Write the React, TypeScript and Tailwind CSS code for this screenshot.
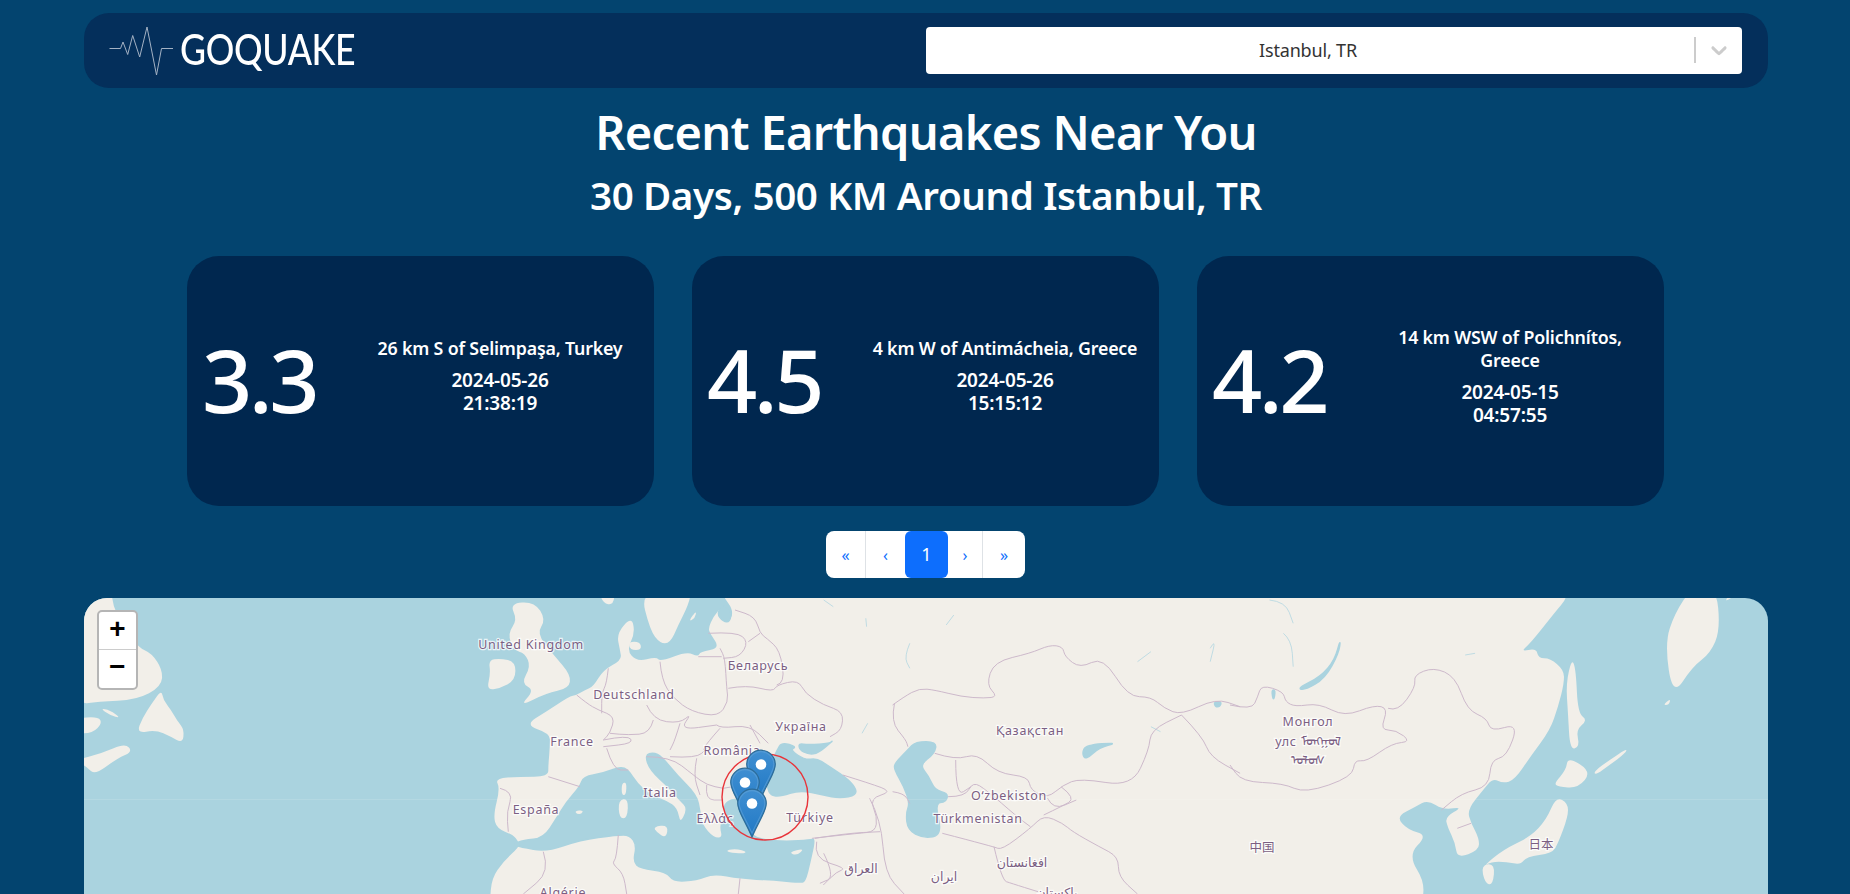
import React from "react";

type Quake = { mag: string; place: string; date: string; time: string };

const quakes: Quake[] = [
  { mag: "3.3", place: "26 km S of Selimpaşa, Turkey", date: "2024-05-26", time: "21:38:19" },
  { mag: "4.5", place: "4 km W of Antimácheia, Greece", date: "2024-05-26", time: "15:15:12" },
  { mag: "4.2", place: "14 km WSW of Polichnítos, Greece", date: "2024-05-15", time: "04:57:55" },
];

// map tracing helpers: each one reads points from a crop of the reference
const west = (p: number[][]) => p.map(([x, y]) => [60 + x * 0.3827, 590 + y / 3]);
const mid = (p: number[][]) => p.map(([x, y]) => [640 + x * 0.3827, 590 + y / 3]);
const east = (p: number[][]) => p.map(([x, y]) => [1230 + x * 0.3953, 590 + y / 3]);
const north = (p: number[][]) => p.map(([x, y]) => [560 + x / 3, 600 + y / 3]);
const south = (p: number[][]) => p.map(([x, y]) => [480 + x / 3, 745 + y / 3]);

// rounds the traced corners off with quadratic curves through the midpoints
const curve = (p: number[][], closed: boolean) => {
  const m = (a: number[], b: number[]) => `${((a[0] + b[0]) / 2).toFixed(1)} ${((a[1] + b[1]) / 2).toFixed(1)}`;
  const c = (a: number[]) => `${a[0].toFixed(1)} ${a[1].toFixed(1)}`;
  if (closed) {
    let d = `M${m(p[p.length - 1], p[0])}`;
    p.forEach((q, i) => {
      d += `Q${c(q)} ${m(q, p[(i + 1) % p.length])}`;
    });
    return d + "Z";
  }
  let d = `M${c(p[0])}`;
  for (let i = 1; i < p.length - 1; i++) d += `Q${c(p[i])} ${m(p[i], p[i + 1])}`;
  return d + `L${c(p[p.length - 1])}`;
};

const eurasia = [
  ...south([[30, 470], [35, 400], [70, 350], [120, 303], [115, 290], [100, 270], [50, 250], [40, 210], [60, 130], [45, 100], [120, 95], [205, 95], [205, 60], [210, 0]]),
  ...west([[1280, 430], [1215, 405], [1270, 365], [1330, 320]]),
  ...north([[50, 285], [75, 270], [100, 260], [130, 210], [185, 180], [180, 150], [170, 100], [215, 50], [225, 100], [200, 150], [230, 185], [290, 170], [300, 185], [380, 155], [415, 170], [420, 155], [480, 145], [450, 100], [445, 85], [460, 50], [490, 15], [510, 65], [520, 30], [490, -10], [490, -30]]),
  ...east([[855, -30], [855, 20], [820, 70], [760, 160], [735, 185], [775, 175], [780, 205], [810, 205], [845, 240], [845, 280], [830, 350], [810, 420], [760, 500], [720, 570], [690, 580], [665, 565], [640, 600], [600, 660], [610, 700], [630, 745], [630, 780], [575, 805], [570, 760], [550, 710], [545, 680], [590, 650], [540, 660], [500, 630], [470, 650], [420, 680], [450, 720], [500, 735], [450, 795], [495, 880], [480, 960]]),
  ...south([[30, 520]]),
];

const islands = [
  west([[1120, 210], [1150, 205], [1190, 215], [1190, 270], [1150, 295], [1115, 300], [1125, 250]]),
  west([[1175, 40], [1240, 35], [1270, 90], [1245, 130], [1290, 195], [1335, 255], [1330, 295], [1270, 310], [1200, 350], [1240, 300], [1205, 280], [1230, 230], [1215, 190], [1185, 180], [1170, 130], [1195, 90]]),
  west([[40, 0], [135, 0], [140, 60], [200, 170], [240, 190], [268, 240], [265, 290], [200, 330], [100, 335], [40, 345]]),
  west([[265, 300], [240, 340], [215, 385], [200, 430], [250, 420], [290, 440], [320, 460], [325, 420], [305, 390], [290, 360], [270, 330]]),
  west([[40, 385], [100, 380], [110, 400], [85, 430], [40, 430]]),
  west([[40, 510], [110, 490], [170, 460], [190, 485], [150, 505], [90, 555], [70, 530]]),
  west([[105, 355], [130, 360], [160, 385], [130, 375]]),
  north([[240, -30], [270, 90], [300, 130], [330, 130], [355, 75], [385, 15], [395, -30]]),
  north([[115, -30], [165, -30], [160, 15], [130, 10]]),
  north([[205, 125], [240, 125], [245, 150], [210, 150]]),
  north([[385, 65], [410, 30], [405, 55]]),
  south([[425, 115], [440, 112], [438, 150], [425, 150]]),
  south([[415, 165], [445, 160], [442, 220], [418, 220]]),
  south([[520, 245], [565, 240], [558, 280], [530, 262]]),
  south([[285, 198], [310, 195], [305, 207], [290, 207]]),
  south([[740, 315], [770, 312], [800, 320], [790, 326], [745, 322]]),
  south([[925, 322], [975, 310], [950, 332]]),
  east([[865, 205], [875, 240], [880, 370], [905, 390], [875, 420], [885, 470], [860, 480], [855, 370], [850, 280]]),
  east([[855, 500], [915, 545], [880, 595], [830, 590], [820, 580], [850, 540]]),
  east([[825, 620], [855, 640], [855, 680], [830, 760], [815, 790], [750, 800], [735, 825], [700, 815], [660, 815], [640, 830], [690, 780], [760, 740], [800, 690]]),
  east([[635, 825], [670, 820], [665, 885], [645, 880]]),
  east([[1170, -10], [1230, -10], [1240, 120], [1215, 190], [1170, 230], [1120, 320], [1100, 160], [1125, 70]]),
  east([[920, 545], [960, 510], [1005, 475], [1000, 490], [960, 525], [925, 555]]),
  east([[1095, 345], [1115, 325], [1110, 345]]),
  east([[1250, 38], [1265, 10], [1285, 10]]),
];

const seas = [
  south([[100, 299], [130, 285], [190, 280], [230, 220], [260, 170], [300, 125], [310, 95], [370, 85], [420, 65], [445, 75], [470, 115], [510, 150], [560, 170], [590, 190], [600, 240], [625, 190], [600, 165], [570, 130], [510, 75], [495, 30], [520, 22], [545, 35], [590, 90], [650, 150], [660, 200], [665, 240], [700, 280], [730, 280], [720, 240], [740, 215], [730, 180], [760, 160], [790, 170], [800, 190], [810, 270], [850, 285], [920, 290], [990, 285], [1005, 280], [990, 350], [975, 410], [960, 412], [880, 405], [780, 400], [700, 385], [650, 405], [580, 410], [560, 380], [480, 370], [460, 350], [470, 300], [450, 270], [410, 270], [300, 285], [200, 320], [120, 305]]),
  south([[875, 50], [892, 15], [905, -8], [950, 5], [930, 15], [975, 45], [1010, 40], [1040, 60], [1095, 95], [1125, 125], [1130, 150], [1080, 160], [1030, 150], [960, 135], [900, 155], [868, 150], [860, 110]]),
  south([[955, -5], [985, 0], [1050, -5], [1060, -15], [1015, 25], [985, 28], [960, 15]]),
  mid([[665, 520], [700, 480], [720, 455], [775, 455], [770, 490], [730, 525], [755, 560], [770, 600], [805, 610], [800, 635], [770, 640], [790, 735], [740, 745], [700, 720], [695, 670], [705, 640], [690, 590], [665, 540]]),
  mid([[1155, 490], [1165, 465], [1250, 458], [1200, 472], [1165, 510]]),
  mid([[1500, 335], [1520, 335], [1515, 350], [1503, 350]]),
  east([[280, 145], [265, 210], [230, 260], [170, 295], [190, 300], [240, 265], [275, 190]]),
  east([[105, 300], [115, 300], [110, 335]]),
  north([[490, 15], [515, 30], [510, 65], [490, 65], [470, 40]]),
];

const lakes: number[][][] = [
  mid([[705, 160], [690, 200], [705, 235]]),
  mid([[1300, 215], [1335, 185]]),
  mid([[590, 85], [592, 110]]),
  mid([[800, 105], [820, 75]]),
  mid([[580, 430], [595, 400]]),
  mid([[1335, 410], [1360, 425]]),
  mid([[1490, 175], [1505, 145], [1490, 215]]),
  mid([[480, 30], [505, 50]]),
  east([[135, 130], [155, 150], [160, 230]]),
  east([[100, 30], [140, 35], [160, 100]]),
  east([[595, 195], [620, 190]]),
];

const borders: number[][][] = [
  north([[50, 285], [80, 310], [115, 330], [165, 350], [150, 400], [130, 420]]),
  north([[145, 205], [140, 250], [125, 280], [125, 340]]),
  north([[300, 185], [305, 240], [340, 295], [395, 335], [475, 350], [505, 305], [500, 265], [495, 175], [480, 145]]),
  north([[415, 170], [485, 170]]),
  north([[505, 265], [560, 255], [640, 275], [650, 255], [715, 240], [735, 280], [790, 315], [850, 335], [845, 390], [810, 410]]),
  north([[650, 255], [675, 250], [660, 150], [620, 115], [600, 100], [585, 50], [525, 30]]),
  north([[445, 100], [530, 95], [565, 125], [540, 170], [490, 175]]),
  north([[565, 125], [600, 100]]),
  north([[260, 315], [280, 360], [360, 370], [395, 340], [360, 390], [470, 375]]),
  north([[280, 360], [270, 400], [205, 405], [150, 400]]),
  north([[360, 370], [345, 420], [330, 450]]),
  north([[470, 375], [480, 385], [570, 375], [625, 430]]),
  north([[480, 385], [440, 430], [430, 450]]),
  north([[570, 375], [600, 430]]),
  north([[130, 420], [205, 405], [220, 430], [130, 440]]),
  south([[60, 130], [100, 140], [80, 200], [85, 260]]),
  south([[205, 95], [300, 125]]),
  south([[380, 10], [400, 75], [445, 75]]),
  south([[500, 35], [570, 35], [640, 90], [680, 120], [730, 130]]),
  south([[570, 35], [650, 40], [680, 10]]),
  south([[650, 40], [640, 90], [660, 150]]),
  south([[680, 120], [675, 165], [730, 165]]),
  south([[730, 130], [790, 120], [870, 100]]),
  south([[190, 320], [210, 380], [130, 447]]),
  south([[415, 270], [410, 340], [395, 355], [430, 385], [440, 447]]),
  south([[1005, 280], [1100, 265], [1200, 260]]),
  south([[1010, 290], [1000, 340], [1100, 370], [1070, 380], [1030, 420]]),
  south([[780, 400], [775, 447]]),
  mid([[530, 555], [600, 580], [660, 605], [600, 625], [620, 680], [615, 725], [570, 730], [450, 745]]),
  mid([[660, 605], [690, 610], [705, 640]]),
  mid([[600, 625], [630, 690], [640, 850], [690, 912]]),
  mid([[660, 345], [690, 320], [730, 295], [770, 300], [840, 320], [900, 325], [935, 320], [905, 285], [925, 215], [1020, 190], [1070, 165], [1105, 170], [1110, 200], [1150, 235], [1210, 200], [1275, 320], [1335, 320], [1370, 355], [1415, 375], [1505, 325], [1568, 350]]),
  mid([[665, 340], [655, 395], [695, 450], [700, 470]]),
  mid([[770, 490], [825, 510], [880, 490], [935, 550], [1015, 560], [1020, 600], [1065, 625], [1105, 585], [1150, 565], [1285, 590], [1330, 480], [1335, 420], [1415, 375]]),
  mid([[825, 510], [825, 620], [865, 590]]),
  mid([[805, 620], [850, 620], [870, 575], [905, 600], [985, 680], [1020, 710]]),
  mid([[790, 730], [925, 770], [945, 780], [1020, 715], [1055, 675], [1105, 700], [1130, 725], [1200, 770], [1250, 800], [1250, 860], [1300, 912]]),
  mid([[925, 770], [945, 870], [970, 880], [1040, 905]]),
  mid([[1100, 590], [1140, 625], [1100, 650], [1055, 675]]),
  mid([[1065, 625], [1080, 660], [1140, 630]]),
  mid([[1415, 375], [1470, 440], [1490, 500], [1568, 550]]),
  mid([[480, 790], [510, 860], [470, 880]]),
  east([[0, 345], [55, 360], [70, 320], [80, 285], [135, 305], [140, 335], [165, 350], [225, 340], [290, 380], [365, 345], [400, 355], [380, 420], [420, 420], [458, 455], [410, 460], [345, 515], [315, 510], [310, 560], [190, 610], [135, 580], [30, 575], [0, 525]]),
  east([[400, 355], [425, 365], [470, 290], [465, 255], [515, 232], [570, 260], [600, 360], [650, 385], [660, 425], [730, 400], [700, 500], [660, 510], [655, 590], [585, 610], [535, 660]]),
  east([[575, 715], [610, 700]]),
];

const labels: { x: number; y: number; t: string; s?: number; ls?: number }[] = [
  { x: 531, y: 645, t: "United Kingdom" },
  { x: 634, y: 695, t: "Deutschland" },
  { x: 572, y: 742, t: "France" },
  { x: 536, y: 810, t: "España" },
  { x: 660, y: 793, t: "Italia" },
  { x: 732, y: 751, t: "România" },
  { x: 715, y: 819, t: "Ελλάς" },
  { x: 810, y: 818, t: "Türkiye" },
  { x: 758, y: 666, t: "Беларусь" },
  { x: 801, y: 727, t: "Україна" },
  { x: 1030, y: 731, t: "Қазақстан" },
  { x: 1009, y: 796, t: "O‘zbekiston" },
  { x: 978, y: 819, t: "Türkmenistan" },
  { x: 861, y: 869, t: "العراق", ls: 0 },
  { x: 944, y: 877, t: "ایران", ls: 0 },
  { x: 1022, y: 863, t: "افغانستان", ls: 0 },
  { x: 1057, y: 893, t: "پاکستان", ls: 0 },
  { x: 563, y: 893, t: "Algérie" },
  { x: 1308, y: 722, t: "Монгол" },
  { x: 1308, y: 742, t: "улс ᠮᠣᠩᠭᠣᠯ" },
  { x: 1308, y: 761, t: "ᠤᠯᠤᠰ" },
  { x: 1262, y: 848, t: "中国", ls: 0 },
  { x: 1541, y: 845, t: "日本", ls: 0 },
];

const Pin = ({ x, y }: { x: number; y: number }) => (
  <g transform={`translate(${x - 15} ${y - 48.5}) scale(1.2)`}>
    <path
      d="M12.5 0.6C5.9 0.6 0.6 6 0.6 12.5C0.6 19 5.5 24.5 12.5 40.4C19.5 24.5 24.4 19 24.4 12.5C24.4 6 19.1 0.6 12.5 0.6Z"
      fill="url(#pinFill)"
      stroke="#2e6c97"
      strokeWidth="1"
    />
    <path
      d="M12.5 1.8C6.6 1.8 1.8 6.6 1.8 12.5C1.8 18 6.2 23.2 12.5 37.2C18.8 23.2 23.2 18 23.2 12.5C23.2 6.6 18.4 1.8 12.5 1.8Z"
      fill="none"
      stroke="#5c9fd6"
      strokeOpacity="0.7"
      strokeWidth="0.9"
    />
    <circle cx="12.5" cy="12.5" r="4.4" fill="#fff" />
  </g>
);

const WorldMap = () => (
  <svg viewBox="84 598 1684 296" className="block w-full h-full">
    <defs>
      <linearGradient id="pinFill" x1="0" y1="0" x2="0" y2="1">
        <stop offset="0" stopColor="#408fd2" />
        <stop offset="1" stopColor="#2078c4" />
      </linearGradient>
    </defs>
    <rect x="84" y="598" width="1684" height="296" fill="#aad3df" />
    <g className="blur-[0.4px]">
      <path d={curve(eurasia, true)} fill="#f2efe9" />
      {seas.map((s, i) => (
        <path key={i} d={curve(s, true)} fill="#aad3df" stroke="#aad3df" strokeWidth="1.5" />
      ))}
      {islands.map((s, i) => (
        <path key={i} d={curve(s, true)} fill="#f2efe9" />
      ))}
      {lakes.map((s, i) => (
        <path key={i} d={curve(s, false)} fill="none" stroke="#aad3df" strokeOpacity="0.7" strokeWidth="1" />
      ))}
      {borders.map((s, i) => (
        <path key={i} d={curve(s, false)} fill="none" stroke="#cdb9cb" strokeWidth="1" />
      ))}
    </g>
    <line x1="84" x2="1768" y1="799.5" y2="799.5" stroke="#fff" strokeOpacity="0.12" />
    {labels.map((l) => (
      <text
        key={l.t}
        x={l.x}
        y={l.y + 4}
        textAnchor="middle"
        fill="#7b5f83"
        stroke="#fff"
        strokeOpacity="0.75"
        strokeWidth="2.5"
        fontSize={l.s ?? 12.5}
        letterSpacing={l.ls ?? 0.7}
        className="[paint-order:stroke] font-['Noto_Sans','DejaVu_Sans','Noto_Sans_CJK_SC',sans-serif]"
      >
        {l.t}
      </text>
    ))}
    <circle cx="765" cy="797" r="43" fill="none" stroke="#e8343a" strokeWidth="1.4" />
    <Pin x={761} y={798} />
    <Pin x={745} y={816} />
    <Pin x={752} y={837} />
  </svg>
);

const QuakeCard = ({ quake }: { quake: Quake }) => (
  <article className="flex items-center w-[467px] h-[250px] rounded-[32px] bg-[#00274f] text-white">
    <div className="w-[144px] pb-[4px] text-center text-[88px] leading-none tracking-[-0.04em] font-medium">{quake.mag}</div>
    <div className="ml-[36px] w-[266px] -mt-[10px] text-center font-semibold">
      <p className="text-[17.8px] leading-[23px] mb-[9px] tracking-[-0.01em]">{quake.place}</p>
      <p className="text-[19px] leading-[23px] tracking-[-0.01em]">
        {quake.date}
        <br />
        {quake.time}
      </p>
    </div>
  </article>
);

const App = () => {
  return (
    <div className="h-[894px] overflow-hidden bg-[#03446f] font-['Noto_Sans',sans-serif]">
      <div className="w-[1684px] ml-[84px]">
        <header className="mt-[13px] flex items-center justify-between h-[75px] rounded-[25px] bg-[#042f5b] pl-[25px] pr-[26px]">
          <div className="flex items-center">
            <svg viewBox="0 0 66 50" className="w-[66px] h-[50px]" fill="none">
              <path
                d="M0.5 22.5H11.5L14 16L18.7 28.5L23.7 9.5L30.7 31L38 1L47.5 49L52.5 22.5H64"
                stroke="#a4b2c4"
                strokeWidth="1"
              />
            </svg>
            <span className="ml-[5px] -mt-[3px] text-[42px] leading-none text-white font-['Lato',sans-serif] font-medium tracking-[-0.01em] origin-left scale-x-[0.85]">
              GOQUAKE
            </span>
          </div>
          <div className="flex items-center -mt-[1px] w-[816px] h-[47px] rounded-[4px] bg-white">
            <div className="flex-1 pr-[4px] text-center text-[18px] text-[#333333] tracking-[-0.01em]">Istanbul, TR</div>
            <span className="w-[2px] h-[26px] bg-[#cccccc]" />
            <svg viewBox="0 0 20 20" className="w-[26px] h-[26px] mx-[10px] fill-[#cccccc]">
              <path d="M4.516 7.548c0.436-0.446 1.043-0.481 1.576 0l3.908 3.747 3.908-3.747c0.533-0.481 1.141-0.446 1.574 0 0.436 0.445 0.408 1.197 0 1.615-0.406 0.418-4.695 4.502-4.695 4.502-0.217 0.223-0.502 0.335-0.787 0.335s-0.57-0.112-0.789-0.335c0 0-4.287-4.084-4.695-4.502s-0.436-1.17 0-1.615z" />
            </svg>
          </div>
        </header>

        <div className="pt-[15px] text-center text-white">
          <h1 className="text-[47px] leading-[58px] font-semibold tracking-[-0.015em]">Recent Earthquakes Near You</h1>
          <h2 className="mt-[11px] text-[38.6px] leading-[46px] font-semibold tracking-[-0.01em]">
            30 Days, 500 KM Around Istanbul, TR
          </h2>
        </div>

        <section className="mt-[38px] pr-[1px] flex justify-center gap-[38px]">
          {quakes.map((q) => (
            <QuakeCard key={q.mag} quake={q} />
          ))}
        </section>

        <nav className="mt-[25px] pr-[1px] flex justify-center text-[16px] text-[#0d6efd]">
          <div className="flex h-[47px] w-[199px] rounded-[8px] bg-white">
            <a className="flex items-center justify-center w-[40px] border-r border-[#dee2e6]">«</a>
            <a className="flex items-center justify-center w-[39px]">‹</a>
            <a className="flex items-center justify-center w-[43px] rounded-[6px] bg-[#0d6efd] text-white text-[18px]">1</a>
            <a className="flex items-center justify-center w-[35px] border-r border-[#dee2e6]">›</a>
            <a className="flex items-center justify-center w-[42px]">»</a>
          </div>
        </nav>

        <section className="relative mt-[20px] h-[296px] overflow-hidden rounded-t-[23px]">
          <WorldMap />
          <div className="absolute left-[13px] top-[12px] w-[41px] rounded-[5px] border-2 border-[#b5b5b5] bg-white text-black font-['Liberation_Mono',monospace] font-bold text-[28px]">
            <div className="flex items-center justify-center h-[38px] border-b border-[#cccccc]">+</div>
            <div className="flex items-center justify-center h-[38px]">−</div>
          </div>
        </section>
      </div>
    </div>
  );
};

export default App;
